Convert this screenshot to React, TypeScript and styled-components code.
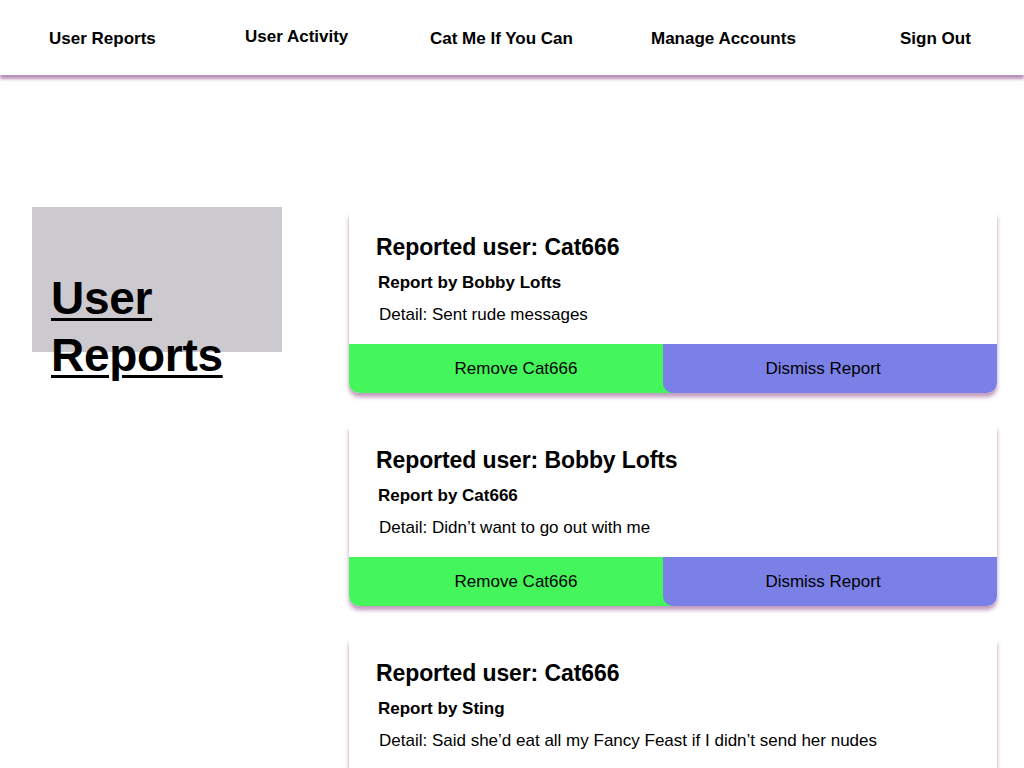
import React from "react";
import styled, { createGlobalStyle } from "styled-components";

const GlobalStyle = createGlobalStyle`
  html, body { margin: 0; padding: 0; background: #ffffff; }
  body { font-family: "Liberation Sans", Arial, sans-serif; color: #000; }
  * { box-sizing: border-box; }
`;

const NavBar = styled.nav`
  height: 75px;
  display: grid;
  grid-template-columns: 196px 185px 221px 249px auto;
  align-items: center;
  padding: 2px 0 0 49px;
  background: #fff;
  box-shadow: 0 4px 3px rgba(140, 70, 135, 0.6);
  position: relative;
  z-index: 2;
`;

const NavItem = styled.a<{ $raised?: boolean }>`
  font-size: 17px;
  font-weight: 700;
  color: #000;
  text-decoration: none;
  justify-self: start;
  padding-bottom: ${(p) => (p.$raised ? "3px" : "0")};
`;

const Main = styled.main`
  display: grid;
  grid-template-columns: 349px 648px;
  padding-top: 132px;
`;

const Side = styled.aside`
  padding-left: 32px;
`;

const TitleBox = styled.div`
  width: 250px;
  height: 145px;
  background: #cccacf;
  padding: 63px 0 0 19px;
`;

const PageTitle = styled.h1`
  margin: 0;
  font-size: 46px;
  line-height: 57px;
  font-weight: 700;
  text-decoration: underline;
  text-decoration-thickness: 3px;
  text-underline-offset: 4px;
  letter-spacing: -0.3px;
`;

const CardList = styled.section`
  display: flex;
  flex-direction: column;
  gap: 33px;
  padding-top: 6px;
`;

const Card = styled.article`
  background: #fff;
  border-radius: 0 0 10px 10px;
  box-shadow: 0 4px 4px rgba(140, 70, 135, 0.55);
`;

const CardBody = styled.div`
  padding: 21px 20px 19px 27px;
`;

const CardTitle = styled.h2`
  margin: 0;
  font-size: 23px;
  line-height: 26px;
  font-weight: 700;
  letter-spacing: -0.1px;
`;

const Reporter = styled.h3`
  margin: 13px 0 0 2px;
  font-size: 17px;
  line-height: 20px;
  font-weight: 700;
`;

const Detail = styled.p`
  margin: 12px 0 0 3px;
  font-size: 17px;
  line-height: 20px;
`;

const Actions = styled.div`
  display: flex;
  height: 49px;
`;

const ActionButton = styled.button<{ $variant: "remove" | "dismiss" }>`
  border: none;
  font-family: "Liberation Sans", Arial, sans-serif;
  font-size: 17px;
  color: #000;
  display: flex;
  align-items: center;
  justify-content: center;
  cursor: pointer;
  position: relative;
  ${(p) =>
    p.$variant === "remove"
      ? `
    flex: 0 0 334px;
    margin-right: -20px;
    background: #44f55c;
    border-radius: 0 0 0 10px;
    z-index: 0;
  `
      : `
    flex: 1;
    background: #7a80e6;
    border-radius: 0 0 10px 10px;
    padding-right: 20px;
    z-index: 1;
  `}
`;

const reports = [
  {
    user: "Cat666",
    by: "Bobby Lofts",
    detail: "Sent rude messages",
  },
  {
    user: "Bobby Lofts",
    by: "Cat666",
    detail: "Didn\u2019t want to go out with me",
  },
  {
    user: "Cat666",
    by: "Sting",
    detail: "Said she\u2019d eat all my Fancy Feast if I didn\u2019t send her nudes",
  },
];

export default function App() {
  return (
    <>
      <GlobalStyle />
      <NavBar>
        <NavItem href="#">User Reports</NavItem>
        <NavItem href="#" $raised>
          User Activity
        </NavItem>
        <NavItem href="#">Cat Me If You Can</NavItem>
        <NavItem href="#">Manage Accounts</NavItem>
        <NavItem href="#">Sign Out</NavItem>
      </NavBar>
      <Main>
        <Side>
          <TitleBox>
            <PageTitle>
              User
              <br />
              Reports
            </PageTitle>
          </TitleBox>
        </Side>
        <CardList>
          {reports.map((r, i) => (
            <Card key={i}>
              <CardBody>
                <CardTitle>Reported user: {r.user}</CardTitle>
                <Reporter>Report by {r.by}</Reporter>
                <Detail>Detail: {r.detail}</Detail>
              </CardBody>
              <Actions>
                <ActionButton $variant="remove">Remove Cat666</ActionButton>
                <ActionButton $variant="dismiss">Dismiss Report</ActionButton>
              </Actions>
            </Card>
          ))}
        </CardList>
      </Main>
    </>
  );
}
